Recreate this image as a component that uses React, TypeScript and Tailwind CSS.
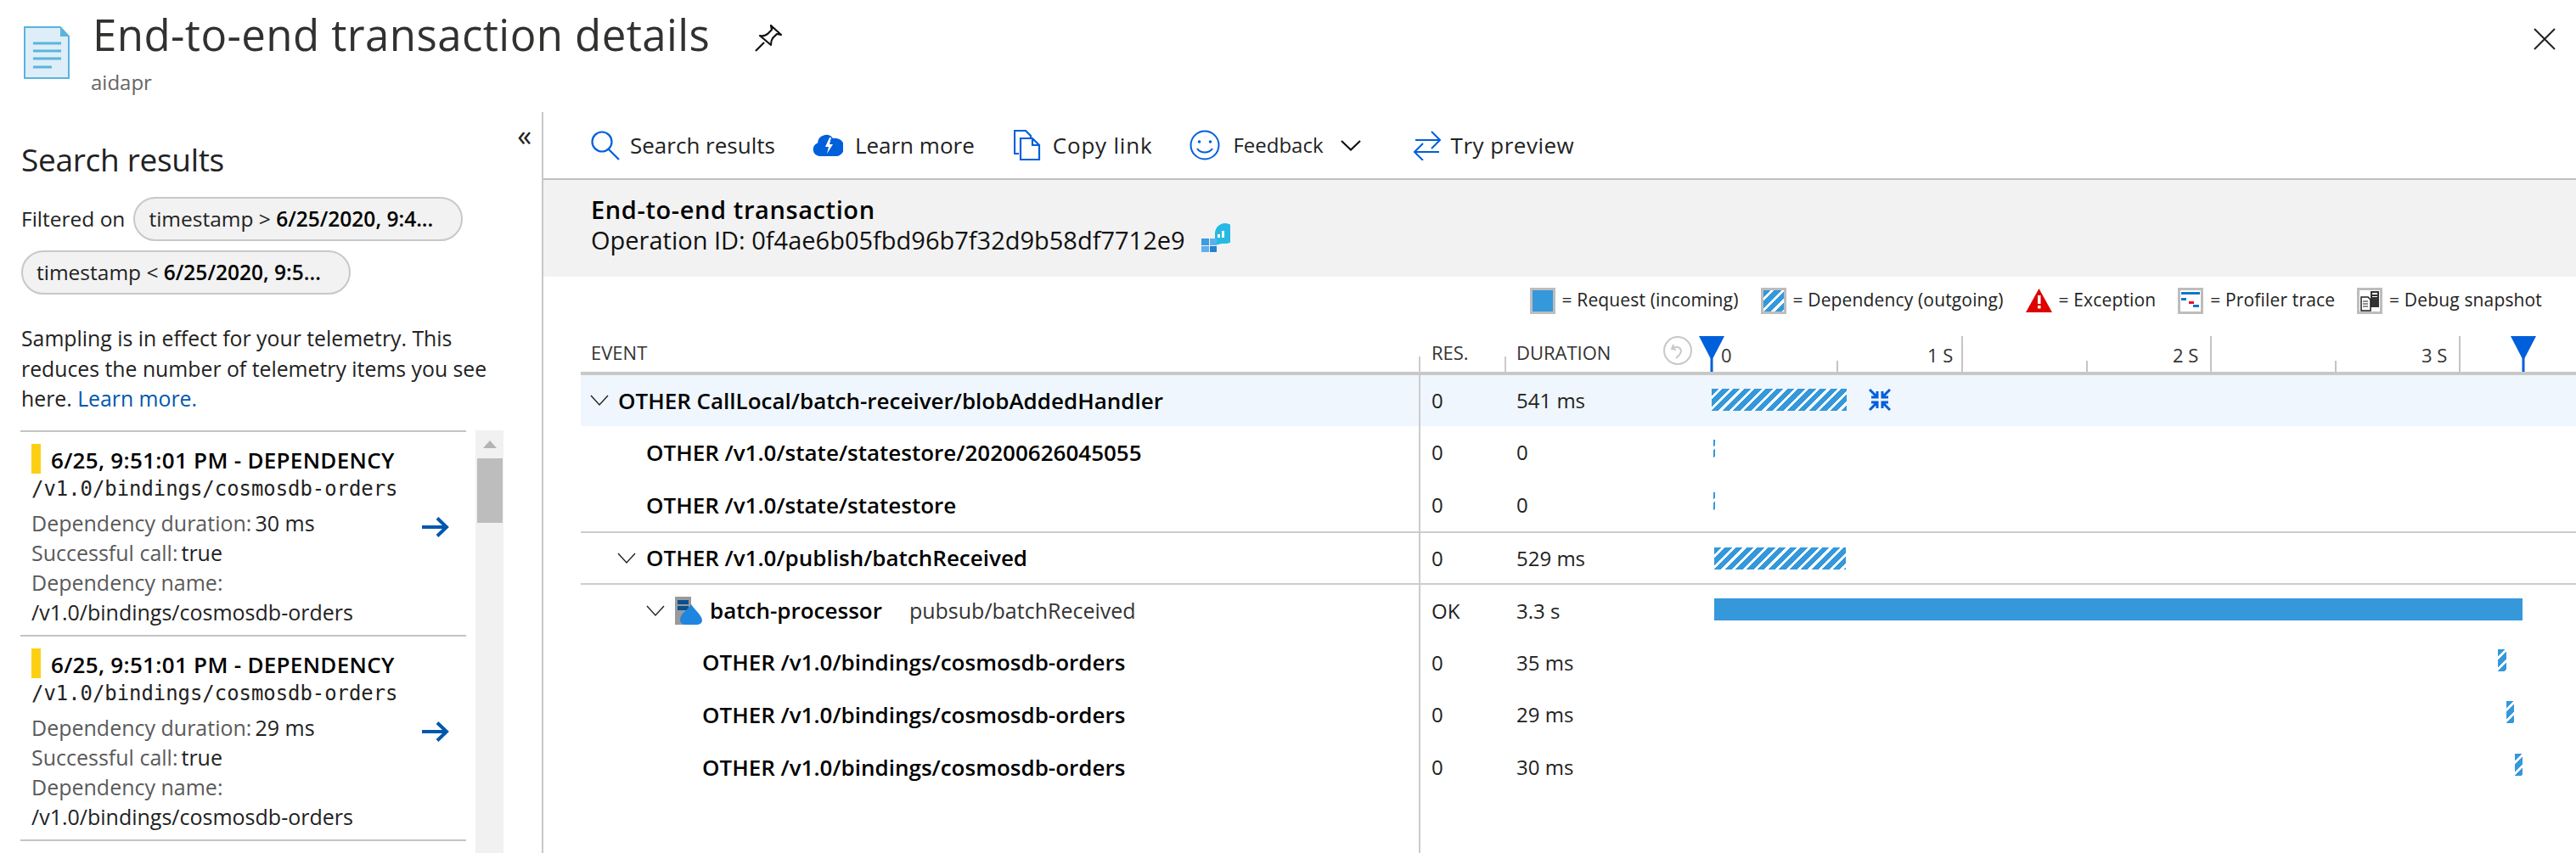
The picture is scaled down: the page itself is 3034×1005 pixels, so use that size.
import { ReactNode } from 'react'

const blue = '#005fdb'
const stripes = 'bg-[repeating-linear-gradient(135deg,#3498db_0,#3498db_6px,#fff_6px,#fff_9px)]'

interface RowData {
  indent: number
  height: string
  label: string
  res: string
  duration: string
  barLeft: number
  barWidth: number
  barUp: number
  solid?: boolean
  chevronLeft?: number
  selected?: boolean
  border?: boolean
  service?: boolean
  barHeight?: number
}

const rows: RowData[] = [
  { indent: 44, height: 'h-[60px]', label: 'OTHER CallLocal/batch-receiver/blobAddedHandler', res: '0', duration: '541 ms', barLeft: 0, barWidth: 159, barUp: 1, chevronLeft: 11, selected: true },
  { indent: 77, height: 'h-[62px]', label: 'OTHER /v1.0/state/statestore/20200626045055', res: '0', duration: '0', barLeft: 2, barWidth: 2, barUp: 4, barHeight: 23 },
  { indent: 77, height: 'h-[62px]', label: 'OTHER /v1.0/state/statestore', res: '0', duration: '0', barLeft: 2, barWidth: 2, barUp: 4, barHeight: 23, border: true },
  { indent: 77, height: 'h-[59px]', label: 'OTHER /v1.0/publish/batchReceived', res: '0', duration: '529 ms', barLeft: 3, barWidth: 155, barUp: 0, chevronLeft: 43, border: true },
  { indent: 152, height: 'h-[61px]', label: 'batch-processor', res: 'OK', duration: '3.3 s', barLeft: 3, barWidth: 952, barUp: 2, solid: true, chevronLeft: 77, service: true },
  { indent: 143, height: 'h-[61px]', label: 'OTHER /v1.0/bindings/cosmosdb-orders', res: '0', duration: '35 ms', barLeft: 926, barWidth: 10, barUp: 3 },
  { indent: 143, height: 'h-[62px]', label: 'OTHER /v1.0/bindings/cosmosdb-orders', res: '0', duration: '29 ms', barLeft: 936, barWidth: 9, barUp: 3 },
  { indent: 143, height: 'h-[62px]', label: 'OTHER /v1.0/bindings/cosmosdb-orders', res: '0', duration: '30 ms', barLeft: 946, barWidth: 9, barUp: 3 },
]

const ticks = [
  { x: 147, tall: false },
  { x: 294, tall: true, label: '1 S', labelLeft: 254 },
  { x: 441, tall: false },
  { x: 587, tall: true, label: '2 S', labelLeft: 543 },
  { x: 734, tall: false },
  { x: 880, tall: true, label: '3 S', labelLeft: 836 },
]

const results = [{ ms: '30 ms' }, { ms: '29 ms' }]

const Chevron = ({ left }: { left: number }) => (
  <svg viewBox="0 0 22 14" className="absolute h-[14px] w-[22px] shrink-0" style={{ left }} fill="none" stroke="#222" strokeWidth="1.4">
    <path d="M1 1l10 11L21 1" />
  </svg>
)

const ToolItem = ({ icon, children, className = '' }: { icon: ReactNode; children: ReactNode; className?: string }) => (
  <div className={`flex items-center ${className}`}>
    {icon}
    {children}
  </div>
)

const Swatch = ({ children, className = '' }: { children?: ReactNode; className?: string }) => (
  <div className={`h-[31px] w-[30px] shrink-0 border-[3px] border-[#bdbdbd] ${className}`}>{children}</div>
)

const Marker = ({ left }: { left: number }) => (
  <svg viewBox="0 0 30 42" className="absolute top-0 h-[42px] w-[30px]" style={{ left }}>
    <path d="M0 0h30L16.500 26V42h-3V26z" fill={blue} />
  </svg>
)

const ResultCard = ({ ms }: { ms: string }) => (
  <div className="relative h-[241px] border-b-2 border-[#c4c4c4] pl-[13px] pt-[14px]">
    <div className="flex h-[35px] items-center">
      <div className="h-[35px] w-[11px] bg-[#fdcf13]" />
      <div className="ml-[12px] pt-[4px] text-[26px] font-semibold tracking-[0.3px] text-black">6/25, 9:51:01 PM - DEPENDENCY</div>
    </div>
    <div className="mt-[4px] h-[28px] font-['DejaVu_Sans_Mono',monospace] text-[23.900px] leading-[28px] text-[#222]">/v1.0/bindings/cosmosdb-orders</div>
    <div className="mt-[9px] text-[25px] leading-[35px] text-[#5a5a5a]">
      <div>Dependency duration:<span className="ml-1 text-[#222]">{ms}</span></div>
      <div>Successful call:<span className="ml-1 text-[#222]">true</span></div>
      <div>Dependency name:</div>
      <div className="text-[#222]">/v1.0/bindings/cosmosdb-orders</div>
    </div>
    <svg viewBox="0 0 32 24" className="absolute left-[473px] top-[100px] h-[24px] w-[32px]" fill="none" stroke="#0058ad" strokeWidth="4">
      <path d="M0 12h29M18 1.500l11 10.500-11 10.500" />
    </svg>
  </div>
)

const Row = ({ row }: { row: RowData }) => (
  <div
    className={`grid shrink-0 grid-cols-[989px_113px_230px_976px] items-stretch text-[24px] text-[#222] ${row.height} ${row.selected ? 'bg-[#eff6fd]' : ''} ${row.border ? 'box-content border-b-2 border-[#cccccc]' : ''}`}
  >
    <div className="relative flex items-center border-r-2 border-[#cccccc]" style={{ paddingLeft: row.indent }}>
      {row.chevronLeft !== undefined && <Chevron left={row.chevronLeft} />}
      {row.service && (
        <svg viewBox="0 0 33 33" className="absolute left-[111px] h-[33px] w-[33px]">
          <rect x="0" y="0" width="19" height="33" fill="#9a9a9a" />
          <rect x="3" y="4" width="13" height="5" fill="#0a4f8f" />
          <rect x="3" y="11" width="13" height="5" fill="#0a4f8f" />
          <path d="M19 9c3 5 13 13 13 19 0 3-3 5-7 5H13c-4 0-7-2-7-6 0-7 9-11 13-18z" fill="#1f86e0" />
        </svg>
      )}
      <span className="whitespace-nowrap text-[26px] font-semibold text-black">{row.label}</span>
      {row.service && <span className="ml-[32px] whitespace-nowrap text-[25px] text-[#333]">pubsub/batchReceived</span>}
    </div>
    <div className="flex items-center pl-[13px]">{row.res}</div>
    <div className="flex items-center">{row.duration}</div>
    <div className="relative flex items-center">
      <div
        className={row.solid ? 'bg-[#3498db]' : stripes}
        style={{ marginLeft: row.barLeft, marginBottom: row.barUp * 2, width: row.barWidth, height: row.barHeight ?? 26 }}
      />
      {row.selected && (
        <svg viewBox="0 0 26 26" className="ml-[26px] mb-[2px] h-[26px] w-[26px]" fill="none" stroke={blue} strokeWidth="3">
          <path d="M1 1l9 9M10 3v7H3M25 1l-9 9M16 3v7h7M1 25l9-9M10 23v-7H3M25 25l-9-9M16 23v-7h7" />
        </svg>
      )}
    </div>
  </div>
)

export default function App() {
  return (
    <div className="flex h-[1005px] w-[3034px] flex-col overflow-hidden bg-white font-['Open_Sans',sans-serif] text-[#222]">
      <header className="relative flex h-[132px] shrink-0 pl-[28px]">
        <svg viewBox="0 0 54 62" className="mt-[31px] h-[62px] w-[54px]">
          <path d="M1 1h42l10 11v49H1z" fill="#ddeef8" stroke="#5ab4dc" strokeWidth="2" />
          <path d="M43 1l10 11H43z" fill="#5ab4dc" />
          <path d="M11 20h33M11 29h33M11 38h33M11 48h22" stroke="#5ab4dc" strokeWidth="3" />
        </svg>
        <div className="ml-[27px] mt-[10px]">
          <h1 className="text-[51px] font-normal leading-[60px] tracking-[0.4px] text-[#323130]">End-to-end transaction details</h1>
          <div className="-ml-[2px] mt-[12px] text-[24px] leading-[30px] text-[#666]">aidapr</div>
        </div>
        <svg viewBox="0 0 32 32" className="ml-[53px] mt-[29px] h-[32px] w-[32px]" fill="none" stroke="#111" strokeWidth="2.200">
          <path d="M1 31l10-10M6 13c3 1 6 0 9-2l5-5-1-5 12 11-5-1-5 5c-2 3-2 6-2 8z" strokeLinejoin="round" />
        </svg>
        <svg viewBox="0 0 26 26" className="absolute right-[24px] top-[33px] h-[26px] w-[26px]" fill="none" stroke="#222" strokeWidth="2">
          <path d="M1 1l24 24M25 1L1 25" />
        </svg>
      </header>

      <div className="flex min-h-0 flex-1">
        <aside className="w-[640px] shrink-0 border-r-2 border-[#c8c8c8] text-[24.500px]">
          <div className="relative h-[375px] pl-[25px]">
            <div className="absolute right-[12px] top-[7px] text-[34px] leading-[40px] text-[#222]">«</div>
            <h2 className="pt-[34px] text-[37px] font-normal leading-[44px] tracking-[-0.3px] text-[#222]">Search results</h2>
            <div className="mt-[22px] flex h-[52px] items-center">
              <span>Filtered on</span>
              <div className="ml-[10px] flex h-[52px] w-[388px] items-center whitespace-nowrap rounded-full border-2 border-[#c8c8c8] bg-[#f2f2f2] pl-[16px]">
                timestamp &gt;&nbsp;<b className="font-semibold text-black">6/25/2020, 9:4...</b>
              </div>
            </div>
            <div className="mt-[11px] flex h-[52px] w-[388px] items-center whitespace-nowrap rounded-full border-2 border-[#c8c8c8] bg-[#f2f2f2] pl-[16px]">
              timestamp &lt;&nbsp;<b className="font-semibold text-black">6/25/2020, 9:5...</b>
            </div>
            <p className="mt-[34px] w-[580px] text-[24.800px] leading-[35.500px] text-[#222]">
              Sampling is in effect for your telemetry. This reduces the number of telemetry items you see here. <span className="text-[#0058ad]">Learn more.</span>
            </p>
          </div>
          <div className="flex pl-[24px]">
            <div className="w-[525px] border-t-2 border-[#c4c4c4]">
              {results.map((r) => (
                <ResultCard key={r.ms} ms={r.ms} />
              ))}
            </div>
            <div className="ml-[11px] h-[498px] w-[33px] bg-[#f1f1f1] px-[2px] pt-[12px]">
              <svg viewBox="0 0 16 9" className="mx-auto h-[9px] w-[16px]">
                <path d="M8 0l8 9H0z" fill="#b4b4b4" />
              </svg>
              <div className="mt-[12px] h-[76px] w-[30px] bg-[#bdbdbd]" />
            </div>
          </div>
        </aside>

        <main className="flex min-w-0 flex-1 flex-col">
          <div className="flex h-[80px] shrink-0 items-center whitespace-nowrap border-b-2 border-[#c0c0c0] pl-[55px] text-[26px]">
            <ToolItem icon={
              <svg viewBox="0 0 35 35" className="mr-[12px] h-[35px] w-[35px]" fill="none" stroke={blue} strokeWidth="2.200">
                <circle cx="14" cy="13" r="11.500" />
                <path d="M22 22l12 12" />
              </svg>
            }>Search results</ToolItem>
            <ToolItem className="ml-[44px]" icon={
              <svg viewBox="0 0 36 26" className="mr-[14px] h-[26px] w-[36px]">
                <path d="M8 26a8 8 0 0 1-2-15.500A10 10 0 0 1 24 5a9 9 0 0 1 5 21z" fill={blue} />
                <path d="M20 4l-5 11h4l-2 8 7-11h-4l2-8z" fill="#fff" />
              </svg>
            }>Learn more</ToolItem>
            <ToolItem className="ml-[46px]" icon={
              <svg viewBox="0 0 32 36" className="mr-[14px] h-[36px] w-[32px]" fill="none" stroke={blue} strokeWidth="2.200">
                <path d="M6 28H1V1h13l6 6v3M8 10h14l8 8v17H8zM22 10v8h8" />
              </svg>
            }><span className="tracking-[0.8px]">Copy link</span></ToolItem>
            <ToolItem className="ml-[44px]" icon={
              <svg viewBox="0 0 36 36" className="mr-[15px] h-[36px] w-[36px]" fill="none" stroke={blue} strokeWidth="2">
                <circle cx="18" cy="18" r="16.500" />
                <circle cx="11.500" cy="14" r="1.800" fill={blue} stroke="none" />
                <circle cx="24.500" cy="14" r="1.800" fill={blue} stroke="none" />
                <path d="M9 22c4 6 14 6 18 0" />
              </svg>
            }>
              <span className="text-[24px]">Feedback</span>
              <svg viewBox="0 0 24 13" className="ml-[20px] h-[13px] w-[24px]" fill="none" stroke="#111" strokeWidth="2.200">
                <path d="M1 1l11 10.500L23 1" />
              </svg>
            </ToolItem>
            <ToolItem className="ml-[62px]" icon={
              <svg viewBox="0 0 32 35" className="mr-[12px] h-[35px] w-[32px]" fill="none" stroke={blue} strokeWidth="2">
                <path d="M2 11h28M21 1l10 10-10 10M30 25H2M11 15L1 25l10 10" />
              </svg>
            }><span className="tracking-[0.5px]">Try preview</span></ToolItem>
          </div>

          <div className="h-[114px] shrink-0 whitespace-nowrap bg-[#f2f2f2] pl-[56px] pt-[17px] text-[29px] leading-[36px] text-[#111]">
            <div className="font-semibold tracking-[0.6px] text-black">End-to-end transaction</div>
            <div className="flex items-start">
              Operation ID: 0f4ae6b05fbd96b7f32d9b58df7712e9
              <svg viewBox="0 0 34 34" className="ml-[19px] -mt-[2px] h-[34px] w-[34px]">
                <path d="M16 16V12a12 12 0 1 1 12 12h-4l-8 2z" fill="#27b9e4" />
                <path d="M19 17v-4h3v4zM24 17V9h3v8z" fill="#fff" />
                <path d="M0 18h9v8H0z" fill="#3d9be0" />
                <path d="M10 18h8v8h-8zM0 27h9v7H0z" fill="#5cb0ec" />
                <path d="M10 27h8v7h-8z" fill="#2780cf" />
              </svg>
            </div>
          </div>

          <div className="flex h-[44px] shrink-0 items-center justify-end gap-[26px] pt-[12px] pr-[40px] text-[21px] tracking-[0.15px] whitespace-nowrap">
            <div className="flex items-center gap-[8px]"><Swatch className="bg-[#3498db]" />= Request (incoming)</div>
            <div className="flex items-center gap-[8px]"><Swatch className={stripes} />= Dependency (outgoing)</div>
            <div className="flex items-center gap-[8px]">
              <svg viewBox="0 0 31 28" className="h-[28px] w-[31px]">
                <path d="M15.500 0L31 28H0z" fill="#dd0000" />
                <path d="M14 8h3.500v10H14zM14 20h3.500v3.500H14z" fill="#fff" />
              </svg>
              = Exception
            </div>
            <div className="flex items-center gap-[8px]">
              <Swatch className="bg-white">
                <div className="mx-[1px] mt-[2px] h-[3px] bg-[#0f78c8]" />
                <div className="ml-[1px] mt-[4px] h-[3px] w-[6px] bg-[#0f78c8]" />
                <div className="ml-[10px] mt-[1px] h-[3px] w-[6px] bg-[#e8112d]" />
                <div className="ml-[15px] mt-[1px] h-[3px] w-[7px] bg-[#0f78c8]" />
              </Swatch>
              = Profiler trace
            </div>
            <div className="flex items-center gap-[8px]">
              <Swatch className="bg-white">
                <svg viewBox="0 0 24 25" className="h-[25px] w-[24px]">
                  <path d="M13 1h10v19H13z" fill="#333" />
                  <path d="M15 3h6v2h-6zM15 7h6v1h-6z" fill="#fff" />
                  <path d="M2 8h8l3 3v13H2z" fill="#fff" stroke="#222" strokeWidth="1.500" />
                  <path d="M4 13h6M4 16h6M4 19h6" stroke="#222" />
                </svg>
              </Swatch>
              = Debug snapshot
            </div>
          </div>

          <div className="ml-[44px] flex min-h-0 flex-1 flex-col">
            <div className="mt-[26px] grid h-[46px] shrink-0 grid-cols-[989px_99px_244px_976px] border-b-4 border-[#c8c8c8] text-[22px] text-[#333]">
              <div className="flex items-center pb-[4px] pl-[12px]">EVENT</div>
              <div className="relative flex items-center pb-[4px] pl-[13px]">
                <div className="absolute -left-[2px] bottom-0 h-[18px] w-[2px] bg-[#cccccc]" />
                RES.
              </div>
              <div className="relative flex items-center pb-[4px] pl-[14px]">
                <div className="absolute left-0 bottom-0 h-[18px] w-[2px] bg-[#cccccc]" />
                DURATION
                <svg viewBox="0 0 34 34" className="absolute left-[187px] top-0 h-[34px] w-[34px]" fill="none" stroke="#c8c8c8" strokeWidth="2">
                  <circle cx="17" cy="17" r="16" />
                  <path d="M12 10l-2 5 5 1M10 15c3-3 10-3 11 2 0 4-3 6-6 9" />
                </svg>
              </div>
              <div className="relative">
                {ticks.map((t) => (
                  <div key={t.x}>
                    <div
                      className={`absolute bottom-0 w-[2px] bg-[#c4c4c4] ${t.tall ? 'h-[42px]' : 'h-[13px]'}`}
                      style={{ left: t.x }}
                    />
                    {t.label && (
                      <span className="absolute top-[6px]" style={{ left: t.labelLeft }}>{t.label}</span>
                    )}
                  </div>
                ))}
                <span className="absolute left-[11px] top-[6px]">0</span>
                <Marker left={-15} />
                <Marker left={941} />
              </div>
            </div>
            {rows.map((r, i) => (
              <Row key={i} row={r} />
            ))}
            <div className="w-[989px] flex-1 border-r-2 border-[#cccccc]" />
          </div>
        </main>
      </div>
    </div>
  )
}
